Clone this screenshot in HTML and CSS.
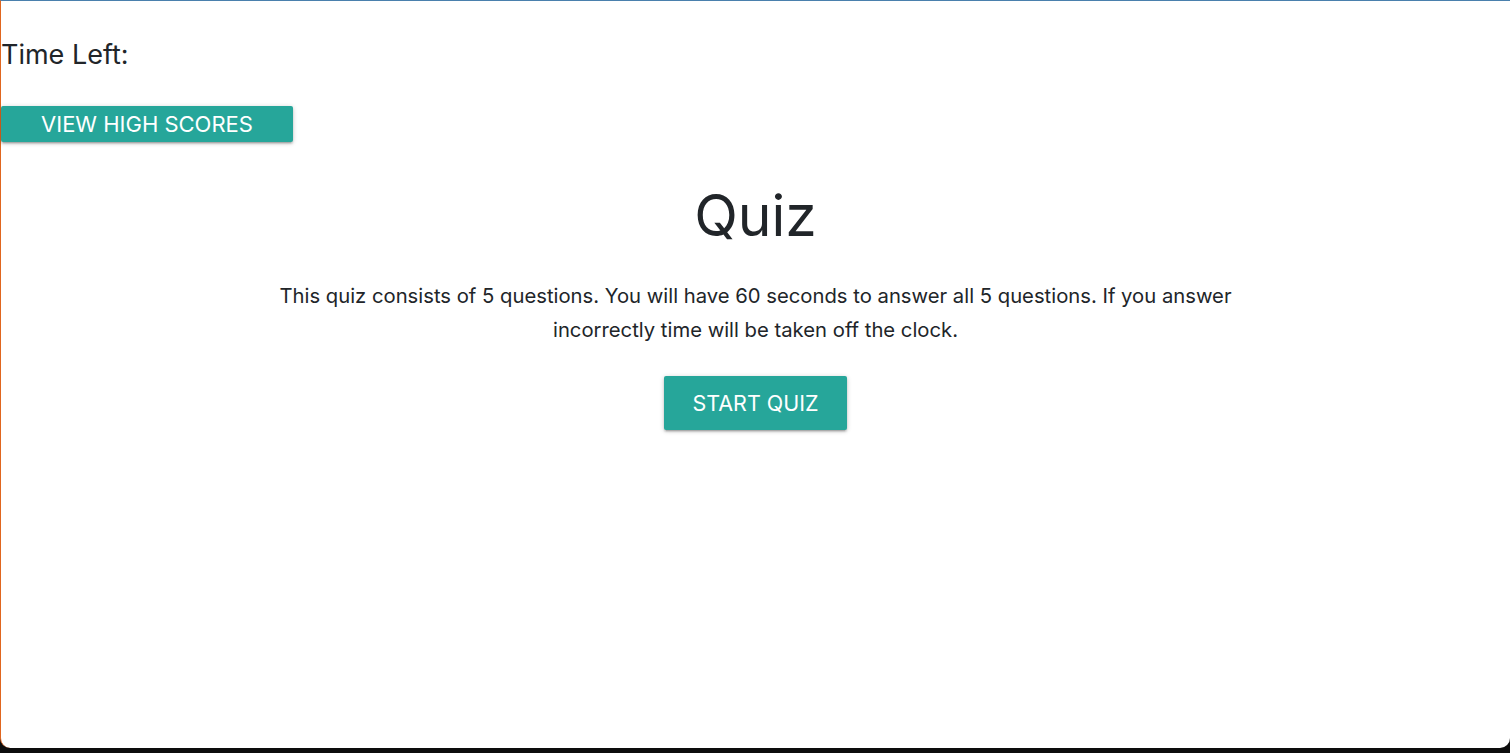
FILE: index.html
```html
<!DOCTYPE html>
<html lang="en">
<head>
<meta charset="utf-8">
<title>Quiz</title>
<link rel="stylesheet" href="styles.css">
</head>
<body>
<div class="window">
  <header class="topbar">
    <div class="timer">Time Left: <span class="time"></span></div>
    <button class="btn btn-scores">VIEW HIGH SCORES</button>
  </header>
  <main class="intro">
    <h1 class="title">Quiz</h1>
    <p class="lead">This quiz consists of 5 questions. You will have 60 seconds to answer all 5 questions. If you answer incorrectly time will be taken off the clock.</p>
    <button class="btn btn-large">START QUIZ</button>
  </main>
</div>
</body>
</html>
```
FILE: styles.css
```css
html, body {
  margin: 0;
  padding: 0;
  height: 100%;
  background: #0d0d0d;
}
body {
  font-family: Inter, "Noto Sans", sans-serif;
  color: #212529;
}
.window {
  box-sizing: border-box;
  height: 748px;
  background: #ffffff;
  border-top: 1px solid #4a80ad;
  border-left: 1px solid #e0661f;
  border-bottom-left-radius: 10px;
  border-bottom-right-radius: 10px;
}
.topbar {
  display: flex;
  flex-direction: column;
  align-items: flex-start;
}
.timer {
  margin-top: 36px;
  margin-left: 0;
  font-size: 27px;
  line-height: 36px;
}
.btn {
  border: none;
  background: #26a69a;
  color: #ffffff;
  font-family: Inter, "Noto Sans", sans-serif;
  cursor: pointer;
  border-radius: 2px;
  box-shadow: 0 2px 2px 0 rgba(0,0,0,0.14), 0 3px 1px -2px rgba(0,0,0,0.12), 0 1px 5px 0 rgba(0,0,0,0.2);
}
.btn-scores {
  margin-top: 33px;
  width: 292px;
  height: 36px;
  font-size: 22px;
  padding: 0;
}
.intro {
  display: flex;
  flex-direction: column;
  align-items: center;
  text-align: center;
}
.title {
  margin: 40px 0 0;
  font-size: 57px;
  font-weight: 400;
  line-height: 68px;
}
.lead {
  margin: 29px 0 0;
  width: 980px;
  font-size: 20.25px;
  line-height: 34px;
}
.btn-large {
  margin-top: 29px;
  height: 54px;
  padding: 0 28px;
  font-size: 21.5px;
}
```
